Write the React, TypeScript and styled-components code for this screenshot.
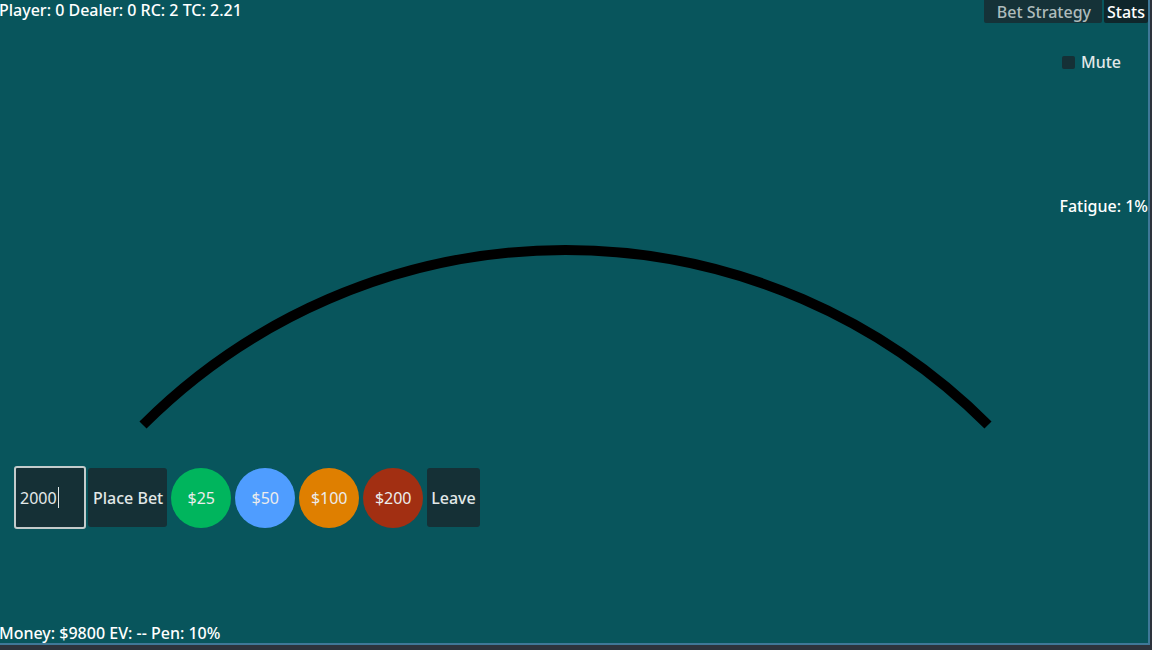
import React from "react";
import styled, { createGlobalStyle } from "styled-components";

const GlobalStyle = createGlobalStyle`
  html, body {
    margin: 0;
    padding: 0;
    background: #2d333c;
    font-family: "Noto Sans", "Open Sans", sans-serif;
  }
`;

interface ChipProps {
  $color: string;
}

const chips = [
  { label: "$25", color: "#00b55d" },
  { label: "$50", color: "#4f9dff" },
  { label: "$100", color: "#df7f00" },
  { label: "$200", color: "#a22f12" },
];

export default function App() {
  return (
    <>
      <GlobalStyle />
      <Panel>
        <TopBar>
          <Readout>Player: 0 Dealer: 0 RC: 2 TC: 2.21</Readout>
          <Tabs>
            <Tab>Bet Strategy</Tab>
            <Tab $active>Stats</Tab>
          </Tabs>
        </TopBar>
        <Body>
          <TableArea>
            <Felt width="1000" height="443" viewBox="0 23 1000 443">
              <path
                d="M 143 425 A 597.5 597.5 0 0 1 988 425"
                fill="none"
                stroke="#000"
                strokeWidth="10"
              />
            </Felt>
            <Controls>
              <BetInput>
                2000
                <Caret />
              </BetInput>
              <ActionButton>Place Bet</ActionButton>
              {chips.map((c) => (
                <Chip key={c.label} $color={c.color}>
                  {c.label}
                </Chip>
              ))}
              <ActionButton $tight>Leave</ActionButton>
            </Controls>
          </TableArea>
          <Side>
            <MuteRow>
              <Check />
              Mute
            </MuteRow>
            <Fatigue>Fatigue: 1%</Fatigue>
          </Side>
        </Body>
        <Readout>Money: $9800 EV: -- Pen: 10%</Readout>
      </Panel>
    </>
  );
}

const Panel = styled.div`
  width: 1148px;
  height: 643px;
  background: #08555c;
  border-right: 2px solid #3f7898;
  border-bottom: 2px solid #3f7898;
  display: flex;
  flex-direction: column;
  overflow: hidden;
`;

const TopBar = styled.div`
  height: 23px;
  display: flex;
  justify-content: space-between;
  align-items: flex-start;
`;

const Readout = styled.div`
  margin-left: -1px;
  color: #ffffff;
  font-size: 16px;
  font-weight: 500;
  line-height: 20px;
  white-space: nowrap;
`;

const Tabs = styled.div`
  display: flex;
  gap: 2px;
`;

const Tab = styled.div<{ $active?: boolean }>`
  height: 23px;
  padding: 0 ${(p) => (p.$active ? "3px" : "11px 0 13px")};
  display: flex;
  align-items: center;
  font-size: 16px;
  border-radius: 0 0 2px 2px;
  background: ${(p) => (p.$active ? "#0f262b" : "#153238")};
  color: ${(p) => (p.$active ? "#ffffff" : "#aebcbc")};
  font-weight: 500;
`;

const Body = styled.div`
  flex: 1;
  display: flex;
`;

const TableArea = styled.div`
  flex: 1;
  display: flex;
  flex-direction: column;
`;

const Felt = styled.svg`
  display: block;
`;

const Controls = styled.div`
  display: flex;
  align-items: center;
  gap: 4px;
  padding-left: 14px;
`;

const BetInput = styled.div`
  box-sizing: border-box;
  width: 72px;
  height: 63px;
  border: 2px solid #c3cbcb;
  border-radius: 3px;
  background: #153036;
  color: #e4eaea;
  font-size: 16px;
  display: flex;
  align-items: center;
  padding-left: 4px;
  margin-right: -2px;
`;

const Caret = styled.span`
  display: inline-block;
  width: 1px;
  height: 21px;
  background: #e4eaea;
  margin-left: 1px;
`;

const ActionButton = styled.div<{ $tight?: boolean }>`
  height: 59px;
  padding: 0 ${(p) => (p.$tight ? "4px" : "4px 0 5px")};
  display: flex;
  align-items: center;
  border-radius: 3px;
  background: #153036;
  color: #e2e8e8;
  font-size: 16px;
  font-weight: 500;
`;

const Chip = styled.div<ChipProps>`
  width: 60px;
  height: 60px;
  border-radius: 50%;
  background: ${(p) => p.$color};
  color: #ececec;
  font-size: 16px;
  display: flex;
  align-items: center;
  justify-content: center;
`;

const Side = styled.div`
  width: 88px;
  display: flex;
  flex-direction: column;
  align-items: flex-end;
`;

const MuteRow = styled.div`
  margin-top: 28px;
  width: 86px;
  display: flex;
  align-items: center;
  gap: 6px;
  color: #e2e8e8;
  font-size: 16px;
  font-weight: 500;
`;

const Check = styled.span`
  width: 13px;
  height: 13px;
  border-radius: 2px;
  background: #153036;
`;

const Fatigue = styled.div`
  margin-top: 122px;
  color: #ffffff;
  font-size: 16px;
  font-weight: 500;
  white-space: nowrap;
`;
